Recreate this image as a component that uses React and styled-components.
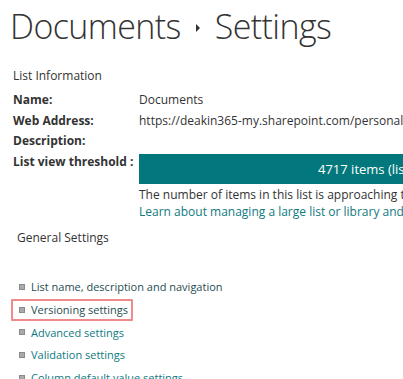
import React from "react";
import styled, { createGlobalStyle } from "styled-components";

const Global = createGlobalStyle`
  html, body { margin: 0; padding: 0; background: #fff; overflow: hidden; }
  body { font-family: "Open Sans", "Noto Sans", sans-serif; color: #333; }
`;

const Page = styled.div`
  width: 403px;
  height: 379px;
  overflow: hidden;
  position: relative;
`;

const Inner = styled.div`
  width: 700px;
  padding: 0 0 0 10px;
`;

const TitleRow = styled.h1`
  margin: 0;
  display: flex;
  align-items: center;
  font-size: 34px;
  font-weight: 300;
  color: #333;
  height: 51px;
  letter-spacing: -0.6px;
`;

const Crumb = styled.span``;

const Arrow = styled.span`
  display: inline-block;
  width: 0;
  height: 0;
  border-top: 4px solid transparent;
  border-bottom: 4px solid transparent;
  border-left: 4px solid #333;
  margin: 4px 15px 0 15px;
`;

const SectionTitle = styled.div`
  font-size: 12px;
  color: #333;
  margin-left: ${(p) => p.$indent || 3}px;
  margin-top: ${(p) => p.$top || 0}px;
  height: 20px;
  line-height: 20px;
`;

const InfoGrid = styled.div`
  display: grid;
  grid-template-columns: 126px 1fr;
  margin-left: 3px;
  margin-top: 4px;
  font-size: 12px;
`;

const Label = styled.div`
  font-weight: 700;
  color: #333;
  height: 20.5px;
  line-height: 20px;
  white-space: nowrap;
`;

const Value = styled.div`
  color: #333;
  height: 20.5px;
  line-height: 20px;
  white-space: nowrap;
`;

const ThresholdCell = styled.div`
  padding-top: 2px;
`;

const Bar = styled.div`
  background: #03787c;
  color: #fff;
  height: 30px;
  line-height: 30px;
  font-size: 13px;
  padding-left: 179px;
  white-space: nowrap;
`;

const Note = styled.div`
  font-size: 12px;
  line-height: 17px;
  white-space: nowrap;
  color: ${(p) => (p.$link ? "#0e7a80" : "#333")};
  margin-top: ${(p) => p.$top || 0}px;
`;

const LinkList = styled.ul`
  list-style: none;
  margin: 28px 0 0 0;
  padding: 0;
`;

const Item = styled.li`
  display: flex;
  align-items: center;
  height: 22.7px;
  font-size: 11px;
  color: ${(p) => (p.$dark ? "#1f4d4f" : "#0e7a80")};
  white-space: nowrap;
`;

const ItemBox = styled.span`
  display: inline-flex;
  align-items: center;
  padding: 0 3px 0 6px;
  margin-left: 1px;
  height: 22px;
  border: 2px solid ${(p) => (p.$hl ? "#ef8b8d" : "transparent")};
  border-radius: 1px;
  box-sizing: border-box;
`;

const Bullet = styled.span`
  width: 4px;
  height: 4px;
  background: #aaa;
  border: 1px solid #8a8a8a;
  margin-right: 6px;
  flex: none;
`;

const items = [
  { t: "List name, description and navigation", dark: true },
  { t: "Versioning settings", dark: true, hl: true },
  { t: "Advanced settings" },
  { t: "Validation settings" },
  { t: "Column default value settings" },
];

export default function App() {
  return (
    <Page>
      <Global />
      <Inner>
        <TitleRow>
          <Crumb>Documents</Crumb>
          <Arrow />
          <Crumb>Settings</Crumb>
        </TitleRow>
        <SectionTitle $top={15}>List Information</SectionTitle>
        <InfoGrid>
          <Label>Name:</Label>
          <Value>Documents</Value>
          <Label>Web Address:</Label>
          <Value>https://deakin365-my.sharepoint.com/personal/documents</Value>
          <Label>Description:</Label>
          <Value />
          <Label>List view threshold :</Label>
          <ThresholdCell>
            <Bar>4717 items (list view threshold is 5000)</Bar>
            <Note $top={2}>The number of items in this list is approaching the list view threshold.</Note>
            <Note $link>Learn about managing a large list or library and how to avoid issues.</Note>
          </ThresholdCell>
        </InfoGrid>
        <SectionTitle $indent={7} $top={8}>General Settings</SectionTitle>
        <LinkList>
          {items.map((it) => (
            <Item key={it.t} $dark={it.dark}>
              <ItemBox $hl={it.hl}>
                <Bullet />
                {it.t}
              </ItemBox>
            </Item>
          ))}
        </LinkList>
      </Inner>
    </Page>
  );
}
